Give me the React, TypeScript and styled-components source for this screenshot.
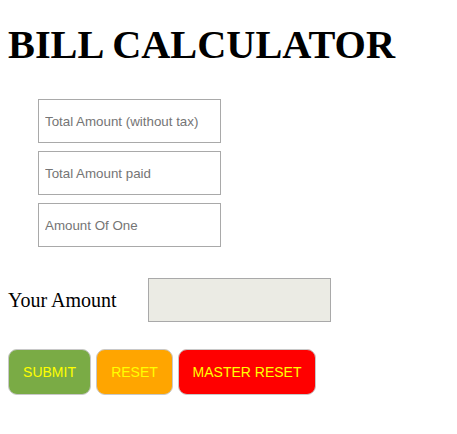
import styled, { createGlobalStyle } from "styled-components";

const GlobalStyle = createGlobalStyle`
body{
  margin:0;
  background:#fff;
  font-family:"Liberation Serif", "Times New Roman", serif;
}
`;

const Page = styled.div`
padding: 0 8px 8px;
`;

const Title = styled.h1`
margin: 22px 0 31px;
font-family: "Liberation Serif", "Times New Roman", serif;
font-size: 40.3px;
line-height: 46px;
font-weight: 700;
color: #000;
`;

const Fields = styled.div`
display: flex;
flex-direction: column;
gap: 8px;
padding-left: 30px;
`;

const Field = styled.input`
box-sizing: border-box;
width: 183px;
height: 44px;
padding: 0 6px;
border: 1px solid #a9a9a9;
font-family: "Liberation Sans", Arial, sans-serif;
font-size: 13.33px;
color: #000;
outline: none;
&::placeholder{
  color:#757575;
}
`;

const ResultRow = styled.div`
display: flex;
align-items: center;
margin-top: 31px;
`;

const ResultLabel = styled.label`
width: 140px;
font-size: 20px;
color: #000;
`;

const ResultBox = styled.input`
box-sizing: border-box;
width: 183px;
height: 44px;
border: 1px solid #a9a9a9;
background: #ebebe4;
`;

const Buttons = styled.div`
display: flex;
gap: 5px;
margin-top: 27px;
`;

const Button = styled.button<{ $bg: string; $w: number }>`
box-sizing: border-box;
width: ${p => p.$w}px;
height: 46px;
border: 1px solid #c8c8c8;
border-radius: 9px;
background: ${p => p.$bg};
color: #ffff00;
font-family: "Liberation Sans", Arial, sans-serif;
font-size: 14px;
cursor: pointer;
`;

export default function App() {
  return (
    <Page>
      <GlobalStyle />
      <Title>BILL CALCULATOR</Title>
      <Fields>
        <Field placeholder="Total Amount (without tax)" />
        <Field placeholder="Total Amount paid" />
        <Field placeholder="Amount Of One" />
      </Fields>
      <ResultRow>
        <ResultLabel>Your Amount</ResultLabel>
        <ResultBox disabled />
      </ResultRow>
      <Buttons>
        <Button $bg="#7aab45" $w={83}>SUBMIT</Button>
        <Button $bg="#ffa500" $w={77}>RESET</Button>
        <Button $bg="#ff0000" $w={138}>MASTER RESET</Button>
      </Buttons>
    </Page>
  );
}
